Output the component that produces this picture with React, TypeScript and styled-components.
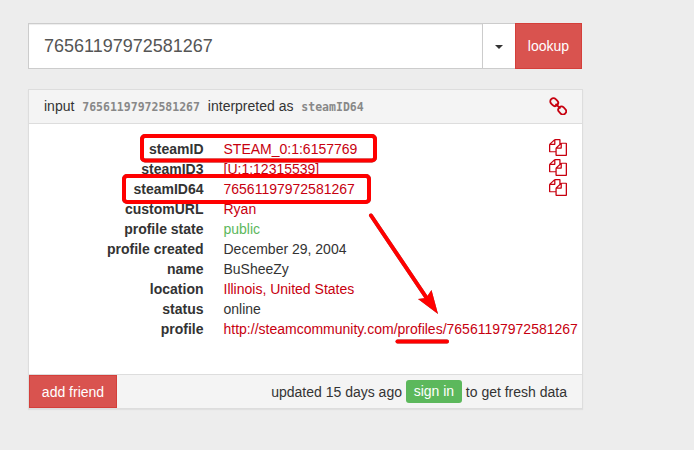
import React from "react";
import styled, { createGlobalStyle } from "styled-components";

const GlobalStyle = createGlobalStyle`
  * { box-sizing: border-box; }
  body {
    margin: 0;
    background: #ededed;
    color: #333;
    font: 14px/20px "Liberation Sans", Arial, sans-serif;
  }
`;

const Page = styled.main`
  position: relative;
  width: 694px;
  height: 450px;
  padding: 23px 0 0 28px;
  overflow: hidden;
`;

const SearchBar = styled.form`
  display: flex;
  width: 554px;
  height: 46px;
`;

const SearchInput = styled.input`
  flex: 1;
  min-width: 0;
  padding: 10px 15px;
  border: 1px solid #ccc;
  border-right: 0;
  border-radius: 0;
  outline: 0;
  background: #fff;
  box-shadow: inset 0 1px 1px rgba(0, 0, 0, 0.075);
  color: #555;
  font: 18px/24px "Liberation Sans", Arial, sans-serif;
`;

const MenuButton = styled.button`
  display: flex;
  align-items: center;
  justify-content: center;
  width: 33px;
  padding: 0;
  border: 1px solid #ccc;
  border-right: 0;
  background: #fff;
`;

const Caret = styled.span`
  margin-top: 2px;
  border: 4px solid transparent;
  border-top-color: #333;
  border-bottom: 0;
`;

const DangerButton = styled.button<{ $width: number }>`
  flex: none;
  width: ${(p) => p.$width}px;
  padding: 0;
  border: 1px solid #d43f3a;
  background: #d9534f;
  color: #fff;
  font: 14px/20px "Liberation Sans", Arial, sans-serif;
`;

const Panel = styled.section`
  width: 555px;
  height: 320px;
  margin-top: 20px;
  display: flex;
  flex-direction: column;
  border: 1px solid #ddd;
  background: #fff;
  box-shadow: 0 1px 1px rgba(0, 0, 0, 0.05);
`;

const PanelHeader = styled.header`
  display: flex;
  align-items: center;
  justify-content: space-between;
  height: 34px;
  padding: 0 15px 2px;
  border-bottom: 1px solid #ddd;
  background: #f4f4f4;
`;

const Code = styled.code`
  padding: 0 4px;
  color: #888;
  font: bold 11.5px "DejaVu Sans Mono", monospace;
`;

const Details = styled.dl`
  flex: 1;
  margin: 0;
  padding: 15px 0 0;
`;

const Row = styled.div`
  display: flex;
  height: 20px;
  padding-right: 15.5px;
`;

const Term = styled.dt`
  flex: none;
  width: 174.5px;
  margin-right: 20px;
  font-weight: bold;
  text-align: right;
`;

type Tone = "plain" | "link" | "good";
const tones: Record<Tone, string> = { plain: "#333", link: "#c7000f", good: "#5cb85c" };

const Value = styled.dd<{ $tone: Tone }>`
  flex: 1;
  min-width: 0;
  margin: 0;
  white-space: nowrap;
  color: ${(p) => tones[p.$tone]};
`;

const LinkSvg = styled.svg`
  display: block;
  flex: none;
  width: 18px;
  height: 18px;
  margin-top: 1px;
  fill: none;
  stroke: #c7000f;
  stroke-width: 1.8;
`;

const CopySvg = styled.svg`
  display: block;
  flex: none;
  width: 18px;
  height: 17px;
  fill: #c7000f;
`;

const PanelFooter = styled.footer`
  display: flex;
  justify-content: space-between;
  height: 34px;
  border-top: 1px solid #ddd;
  background: #f4f4f4;
`;

const Freshness = styled.div`
  display: flex;
  align-items: center;
  gap: 4px;
  padding-right: 15px;
`;

const SignIn = styled.a`
  height: 23px;
  padding: 0 7.7px;
  border-radius: 3px;
  background: #5cb85c;
  color: #fff;
  line-height: 23px;
`;

const Annotations = styled.svg`
  position: absolute;
  inset: 0;
  pointer-events: none;
  filter: drop-shadow(0.5px 0.8px 0.4px rgba(0, 0, 0, 0.5));
`;

const LinkIcon = () => (
  <LinkSvg viewBox="0 0 18 18" aria-hidden>
    <rect x="1" y="1.9" width="8.4" height="6.4" rx="3.1" transform="rotate(45 5.2 5.1)" />
    <rect x="9" y="10.300" width="8.4" height="6.4" rx="3.1" transform="rotate(45 13.200 13.500)" />
    <path d="M6.500 6.900L11.500 11.500" />
  </LinkSvg>
);

const CopyIcon = () => (
  <CopySvg viewBox="0 0 1792 1792" preserveAspectRatio="none" aria-hidden>
    <path d="M1696 384q40 0 68 28t28 68v1216q0 40-28 68t-68 28h-960q-40 0-68-28t-28-68v-288h-544q-40 0-68-28t-28-68v-672q0-40 20-88t48-76l408-408q28-28 76-48t88-20h416q40 0 68 28t28 68v328q68-40 128-40h416zm-544 213l-299 299h299v-299zm-640-384l-299 299h299v-299zm196 647l316-316v-416h-384v416q0 40-28 68t-68 28h-416v640h512v-256q0-40 20-88t48-76zm956 804v-1152h-384v416q0 40-28 68t-68 28h-416v640h896z" />
  </CopySvg>
);

const rows: { term: string; value: string; tone: Tone; copy?: boolean }[] = [
  { term: "steamID", value: "STEAM_0:1:6157769", tone: "link", copy: true },
  { term: "steamID3", value: "[U:1:12315539]", tone: "link", copy: true },
  { term: "steamID64", value: "76561197972581267", tone: "link", copy: true },
  { term: "customURL", value: "Ryan", tone: "link" },
  { term: "profile state", value: "public", tone: "good" },
  { term: "profile created", value: "December 29, 2004", tone: "plain" },
  { term: "name", value: "BuSheeZy", tone: "plain" },
  { term: "location", value: "Illinois, United States", tone: "link" },
  { term: "status", value: "online", tone: "plain" },
  { term: "profile", value: "http://steamcommunity.com/profiles/76561197972581267", tone: "link" },
];

export default function App() {
  return (
    <Page>
      <GlobalStyle />
      <SearchBar>
        <SearchInput defaultValue="76561197972581267" />
        <MenuButton type="button"><Caret /></MenuButton>
        <DangerButton type="button" $width={67}>lookup</DangerButton>
      </SearchBar>
      <Panel>
        <PanelHeader>
          <div>
            input <Code>76561197972581267</Code> interpreted as <Code>steamID64</Code>
          </div>
          <LinkIcon />
        </PanelHeader>
        <Details>
          {rows.map((r) => (
            <Row key={r.term}>
              <Term>{r.term}</Term>
              <Value $tone={r.tone}>{r.value}</Value>
              {r.copy && <CopyIcon />}
            </Row>
          ))}
        </Details>
        <PanelFooter>
          <DangerButton type="button" $width={88}>add friend</DangerButton>
          <Freshness>
            <span>updated 15 days ago</span>
            <SignIn>sign in</SignIn>
            <span>to get fresh data</span>
          </Freshness>
        </PanelFooter>
      </Panel>
      <Annotations width="694" height="450" fill="none" stroke="#f00" strokeWidth="4">
        <rect x="142" y="136" width="233" height="24.5" rx="3" />
        <rect x="124" y="176" width="245" height="26" rx="3" />
        <path d="M371 215.500L428 300" strokeLinecap="round" />
        <path d="M397.500 341.500H447" strokeLinecap="round" />
        <path d="M438 314L418 299L426 298L431.500 290Z" fill="#f00" stroke="none" />
      </Annotations>
    </Page>
  );
}
